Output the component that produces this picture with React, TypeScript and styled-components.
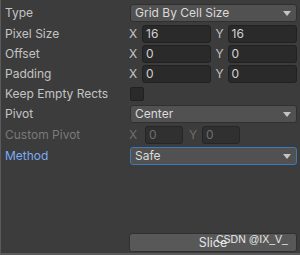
import { FC } from 'react'
import styled, { createGlobalStyle } from 'styled-components'

const GlobalStyle = createGlobalStyle`
  html, body {
    margin: 0;
    padding: 0;
    background: #3c3c3c;
  }
  body {
    font-family: Inter, "Noto Sans", sans-serif;
    font-size: 12px;
  }
`

const Panel = styled.div`
  position: relative;
  box-sizing: border-box;
  width: 300px;
  height: 255px;
  background: #3c3c3c;
  border-left: 1px solid #5a5a5a;
  border-bottom: 2px solid #5a5a5a;
  padding: 4px 3px 0 4px;
  display: flex;
  flex-direction: column;
  color: #c4c4c4;
`

const Rows = styled.div`
  display: flex;
  flex-direction: column;
  gap: 2px;
`

const Row = styled.div<{ $extra?: number }>`
  display: grid;
  grid-template-columns: 124px 1fr;
  height: 18px;
  align-items: center;
  margin-top: ${({ $extra }) => $extra ?? 0}px;
`

const Label = styled.span<{ $tone?: 'normal' | 'disabled' | 'focus' }>`
  line-height: 18px;
  color: ${({ $tone }) =>
    $tone === 'disabled' ? '#7a7a7a' : $tone === 'focus' ? '#7babf5' : '#c4c4c4'};
  white-space: nowrap;
`

const Dropdown = styled.div<{ $focused?: boolean }>`
  box-sizing: border-box;
  margin-left: 1px;
  height: 18px;
  background: #515151;
  border: 1px solid ${({ $focused }) => ($focused ? '#3a79bb' : '#303030')};
  border-radius: 3px;
  display: flex;
  align-items: center;
  justify-content: space-between;
  padding: 0 5px 0 4px;
  color: #dadada;
  line-height: 16px;
`

const Arrow = styled.span`
  width: 0;
  height: 0;
  border-left: 4px solid transparent;
  border-right: 4px solid transparent;
  border-top: 5px solid #c4c4c4;
  margin-top: 1px;
`

const Vector = styled.div<{ $narrow?: boolean }>`
  display: flex;
  align-items: center;
  height: 18px;
  gap: ${({ $narrow }) => ($narrow ? '6px' : '5px')};
`

const Axis = styled.div<{ $narrow?: boolean }>`
  display: flex;
  align-items: center;
  flex: ${({ $narrow }) => ($narrow ? '0 0 auto' : '1')};
`

const AxisLabel = styled.span<{ $disabled?: boolean; $w: number }>`
  width: ${({ $w }) => $w}px;
  color: ${({ $disabled }) => ($disabled ? '#6e6e6e' : '#c4c4c4')};
  line-height: 18px;
`

const Field = styled.div<{ $disabled?: boolean }>`
  box-sizing: border-box;
  flex: ${({ $disabled }) => ($disabled ? '0 0 38px' : '1')};
  height: 18px;
  background: ${({ $disabled }) => ($disabled ? '#303030' : '#2a2a2a')};
  border: 1px solid ${({ $disabled }) => ($disabled ? '#262626' : '#212121')};
  border-radius: 3px;
  padding-left: 3px;
  line-height: 16px;
  color: ${({ $disabled }) => ($disabled ? '#6e6e6e' : '#d2d2d2')};
`

const Checkbox = styled.div`
  box-sizing: border-box;
  margin-left: 1px;
  width: 14px;
  height: 14px;
  background: #2a2a2a;
  border: 1px solid #212121;
  border-radius: 2px;
`

const Footer = styled.div`
  margin-top: auto;
  margin-bottom: 1px;
  display: grid;
  grid-template-columns: 124px 1fr;
`

const Button = styled.div`
  position: relative;
  box-sizing: border-box;
  height: 19px;
  background: #585858;
  border: 1px solid #303030;
  border-radius: 3px;
  color: #e4e4e4;
  text-align: center;
  line-height: 17px;
  font-size: 12.5px;
`

const Watermark = styled.span`
  position: absolute;
  left: 86px;
  top: -2px;
  font-family: "Liberation Sans", Arial, sans-serif;
  font-size: 10.5px;
  line-height: 14px;
  color: #e8e8e8;
  white-space: nowrap;
`

const Vec2: FC<{ x: string; y: string }> = ({ x, y }) => (
  <Vector>
    <Axis>
      <AxisLabel $w={13}>X</AxisLabel>
      <Field>{x}</Field>
    </Axis>
    <Axis>
      <AxisLabel $w={12}>Y</AxisLabel>
      <Field>{y}</Field>
    </Axis>
  </Vector>
)

const App: FC = () => (
  <>
    <GlobalStyle />
    <Panel>
      <Rows>
        <Row>
          <Label>Type</Label>
          <Dropdown>
            Grid By Cell Size
            <Arrow />
          </Dropdown>
        </Row>
        <Row $extra={1}>
          <Label>Pixel Size</Label>
          <Vec2 x="16" y="16" />
        </Row>
        <Row>
          <Label>Offset</Label>
          <Vec2 x="0" y="0" />
        </Row>
        <Row>
          <Label>Padding</Label>
          <Vec2 x="0" y="0" />
        </Row>
        <Row>
          <Label>Keep Empty Rects</Label>
          <Checkbox />
        </Row>
        <Row>
          <Label>Pivot</Label>
          <Dropdown>
            Center
            <Arrow />
          </Dropdown>
        </Row>
        <Row $extra={1}>
          <Label $tone="disabled">Custom Pivot</Label>
          <Vector $narrow>
            <Axis $narrow>
              <AxisLabel $w={16} $disabled>X</AxisLabel>
              <Field $disabled>0</Field>
            </Axis>
            <Axis $narrow>
              <AxisLabel $w={13} $disabled>Y</AxisLabel>
              <Field $disabled>0</Field>
            </Axis>
          </Vector>
        </Row>
        <Row $extra={1}>
          <Label $tone="focus">Method</Label>
          <Dropdown $focused>
            Safe
            <Arrow />
          </Dropdown>
        </Row>
      </Rows>
      <Footer>
        <span />
        <Button>
          Slice
          <Watermark>CSDN @IX_V_</Watermark>
        </Button>
      </Footer>
    </Panel>
  </>
)

export default App
